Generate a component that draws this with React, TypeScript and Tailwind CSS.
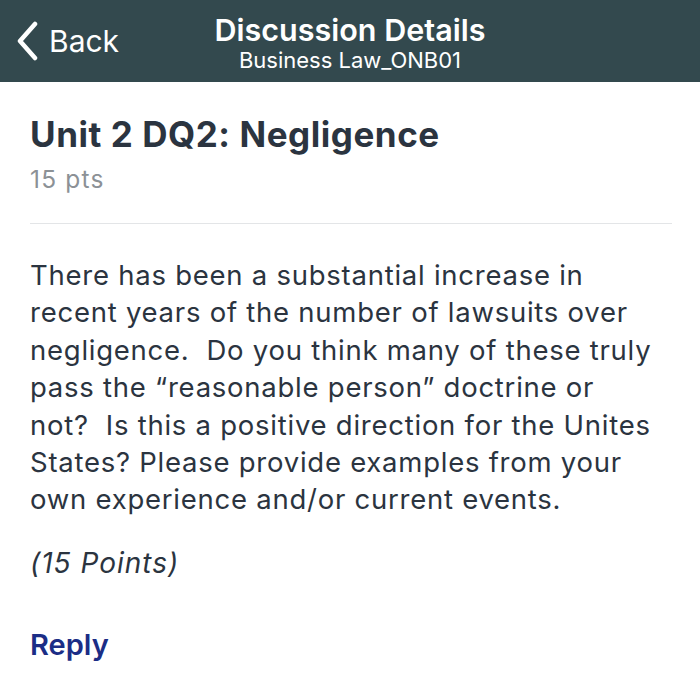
const lines = [
  "There has been a substantial increase in",
  "recent years of the number of lawsuits over",
  "negligence.\u00a0 Do you think many of these truly",
  "pass the “reasonable person” doctrine or",
  "not?\u00a0 Is this a positive direction for the Unites",
  "States? Please provide examples from your",
  "own experience and/or current events.",
];

export default function App() {
  return (
    <div className="w-[700px] h-[692px] bg-white overflow-hidden" style={{ fontFamily: "Inter, Roboto, sans-serif" }}>
      <div className="h-[82px] bg-[#33494e] flex items-center relative text-white">
        <div className="flex items-center pl-[16px]">
          <svg width="22" height="40" viewBox="0 0 22 40" fill="none">
            <path d="M19 3L4 20l15 17" stroke="white" strokeWidth="4.5" strokeLinecap="round" strokeLinejoin="round" />
          </svg>
          <span className="ml-[11px] text-[30px] leading-none">Back</span>
        </div>
        <div className="absolute left-0 right-0 top-[12px] flex flex-col items-center pointer-events-none">
          <div className="text-[30.5px] font-semibold leading-[36px]">Discussion Details</div>
          <div className="text-[22px] leading-[24px]">Business Law_ONB01</div>
        </div>
      </div>
      <div className="px-[30px]">
        <div className="pt-[32px] text-[35px] font-bold text-[#2b3440] leading-[40px] tracking-[0.55px]">Unit 2 DQ2: Negligence</div>
        <div className="mt-[10px] text-[24.5px] text-[#8c9196] leading-[30px] tracking-[1.2px]">15 pts</div>
        <div className="mt-[29px] h-px bg-[#e3e5e7] -mr-[2px]"></div>
        <div className="mt-[33px] text-[27.5px] text-[#2b3440] leading-[37.4px] tracking-[0.75px] whitespace-nowrap">
          {lines.map((l) => (
            <div key={l}>{l}</div>
          ))}
        </div>
        <div className="mt-[26px] text-[28px] italic text-[#2b3440] leading-[37px] tracking-[1px]">(15 Points)</div>
        <div className="mt-[44px] text-[29px] font-semibold text-[#1b2d86] leading-[37px]">Reply</div>
      </div>
    </div>
  );
}
